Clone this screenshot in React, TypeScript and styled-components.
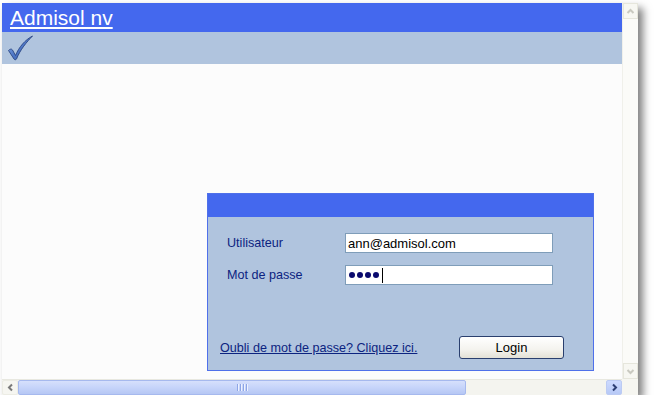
import React from "react";
import styled, { createGlobalStyle } from "styled-components";

const GlobalStyle = createGlobalStyle`
  html, body { margin: 0; padding: 0; background: #ffffff; }
  body { font-family: "Liberation Sans", Arial, sans-serif; }
`;

const Frame = styled.div`
  margin: 3px 0 0 2px;
  width: 636px;
  height: 392px;
  display: grid;
  grid-template-columns: 620px 16px;
  grid-template-rows: 376px 16px;
  box-shadow: 5px 5px 8px rgba(0, 0, 0, 0.5);
  background: #f7f7f3;
`;

const Viewport = styled.div`
  background: #fcfcfc;
  display: flex;
  flex-direction: column;
  overflow: hidden;
`;

const TitleBar = styled.div`
  height: 29px;
  background: #4468ee;
  display: flex;
  align-items: center;
  padding-left: 8px;
`;

const Title = styled.a`
  color: #ffffff;
  font-size: 21px;
  font-family: "Liberation Sans", Arial, sans-serif;
  text-decoration: underline;
  text-underline-offset: 2px;
  line-height: 1;
`;

const Band = styled.div`
  height: 32px;
  background: #b0c4de;
  display: flex;
  align-items: center;
  padding-left: 5px;
`;

const Body = styled.div`
  flex: 1;
  padding: 129px 0 0 205px;
`;

const Panel = styled.div`
  width: 385px;
  height: 176px;
  border: 1px solid #4f70ea;
  background: #b0c4de;
  display: flex;
  flex-direction: column;
`;

const PanelHeader = styled.div`
  height: 23px;
  background: #4468ee;
`;

const FormGrid = styled.div`
  display: grid;
  grid-template-columns: 118px 208px;
  grid-auto-rows: 20px;
  row-gap: 12px;
  padding: 16px 0 0 19px;
`;

const Label = styled.label`
  font-size: 12.6px;
  color: #0c2380;
  display: flex;
  align-items: center;
`;

const Field = styled.div`
  box-sizing: border-box;
  height: 20px;
  border: 1px solid #7f9db9;
  background: #ffffff;
  display: flex;
  align-items: center;
  padding-left: 2px;
  font-size: 13px;
  color: #000000;
`;

const Dot = styled.span`
  width: 6px;
  height: 6px;
  border-radius: 50%;
  background: #0a0a6e;
  margin-left: 1px;
  margin-right: 1px;
`;

const Caret = styled.span`
  width: 1px;
  height: 15px;
  background: #000;
  margin-left: 2px;
`;

const Footer = styled.div`
  display: flex;
  align-items: center;
  margin-top: 51px;
  padding: 0 29px 0 12px;
`;

const ForgotLink = styled.a`
  font-size: 12.6px;
  color: #0c2380;
  text-decoration: underline;
`;

const LoginButton = styled.button`
  margin-left: auto;
  width: 105px;
  height: 23px;
  border: 1px solid #2a3f6e;
  border-radius: 3px;
  background: linear-gradient(#ffffff 0%, #f4f3ee 60%, #e3e1d6 100%);
  font-family: "Liberation Sans", Arial, sans-serif;
  font-size: 13px;
  color: #000;
  padding: 0;
`;

const VScroll = styled.div`
  display: flex;
  flex-direction: column;
  background: #fbfbf8;
  border-left: 1px solid #f0f0ea;
`;

const VButton = styled.div`
  height: 16px;
  display: flex;
  align-items: center;
  justify-content: center;
  background: #f7f7f2;
  border: 1px solid #e6e6dc;
  box-sizing: border-box;
`;

const Track = styled.div`
  flex: 1;
`;

const HScroll = styled.div`
  display: flex;
  background: #f4f4ef;
  border-top: 1px solid #e8e8e0;
  box-sizing: border-box;
`;

const HArrow = styled.div<{ $active?: boolean }>`
  width: 16px;
  display: flex;
  align-items: center;
  justify-content: center;
  box-sizing: border-box;
  background: ${(p) => (p.$active ? "linear-gradient(#cddaff, #b7c9f6)" : "#f6f6f1")};
  border: 1px solid ${(p) => (p.$active ? "#bccbf3" : "#ecece4")};
  border-radius: 2px;
`;

const Thumb = styled.div`
  width: 448px;
  box-sizing: border-box;
  border: 1px solid #a6b9ee;
  border-radius: 2px;
  background: linear-gradient(#d6e0fc 0%, #c6d4fa 50%, #b6c7f4 100%);
  display: flex;
  align-items: center;
  justify-content: center;
  gap: 1px;
`;

const Grip = styled.span`
  width: 1px;
  height: 7px;
  background: #8ea6e6;
  border-right: 1px solid #eef2fe;
`;

const Corner = styled.div`
  background: #f6f6f1;
`;

const CheckIcon = () => (
  <svg width="27" height="26" viewBox="0 0 27 26">
    <defs>
      <linearGradient id="chk" x1="0" y1="0" x2="1" y2="1">
        <stop offset="0" stopColor="#8fb0ea" />
        <stop offset="0.5" stopColor="#4f78c8" />
        <stop offset="1" stopColor="#2c4f9a" />
      </linearGradient>
    </defs>
    <path
      d="M1.5 15.5 C3 14 4.5 13.5 5.5 15 L8.5 20.5 C12 12 18 5 25.5 1 C20 6.5 13 15 9.5 24 C9 25 7.5 25 7 24 Z"
      fill="url(#chk)"
      stroke="#2a4582"
      strokeWidth="0.9"
      strokeLinejoin="round"
    />
  </svg>
);

const Chevron = ({ dir, color }: { dir: "up" | "down" | "left" | "right"; color: string }) => {
  const paths: Record<string, string> = {
    up: "M1.5 6 L4.5 3 L7.5 6",
    down: "M1.5 3 L4.5 6 L7.5 3",
    left: "M6 1.5 L3 4.5 L6 7.5",
    right: "M3 1.5 L6 4.5 L3 7.5",
  };
  return (
    <svg width="9" height="9" viewBox="0 0 9 9">
      <path d={paths[dir]} fill="none" stroke={color} strokeWidth="2" />
    </svg>
  );
};

export default function App() {
  return (
    <>
      <GlobalStyle />
      <Frame>
        <Viewport>
          <TitleBar>
            <Title href="#">Admisol nv</Title>
          </TitleBar>
          <Band>
            <CheckIcon />
          </Band>
          <Body>
            <Panel>
              <PanelHeader />
              <FormGrid>
                <Label>Utilisateur</Label>
                <Field>ann@admisol.com</Field>
                <Label>Mot de passe</Label>
                <Field>
                  <Dot />
                  <Dot />
                  <Dot />
                  <Dot />
                  <Caret />
                </Field>
              </FormGrid>
              <Footer>
                <ForgotLink href="#">Oubli de mot de passe? Cliquez ici.</ForgotLink>
                <LoginButton>Login</LoginButton>
              </Footer>
            </Panel>
          </Body>
        </Viewport>
        <VScroll>
          <VButton>
            <Chevron dir="up" color="#c9c9c0" />
          </VButton>
          <Track />
          <VButton>
            <Chevron dir="down" color="#c9c9c0" />
          </VButton>
        </VScroll>
        <HScroll>
          <HArrow>
            <Chevron dir="left" color="#7a7a7a" />
          </HArrow>
          <Thumb>
            <Grip />
            <Grip />
            <Grip />
            <Grip />
          </Thumb>
          <Track />
          <HArrow $active>
            <Chevron dir="right" color="#2d3f74" />
          </HArrow>
        </HScroll>
        <Corner />
      </Frame>
    </>
  );
}
